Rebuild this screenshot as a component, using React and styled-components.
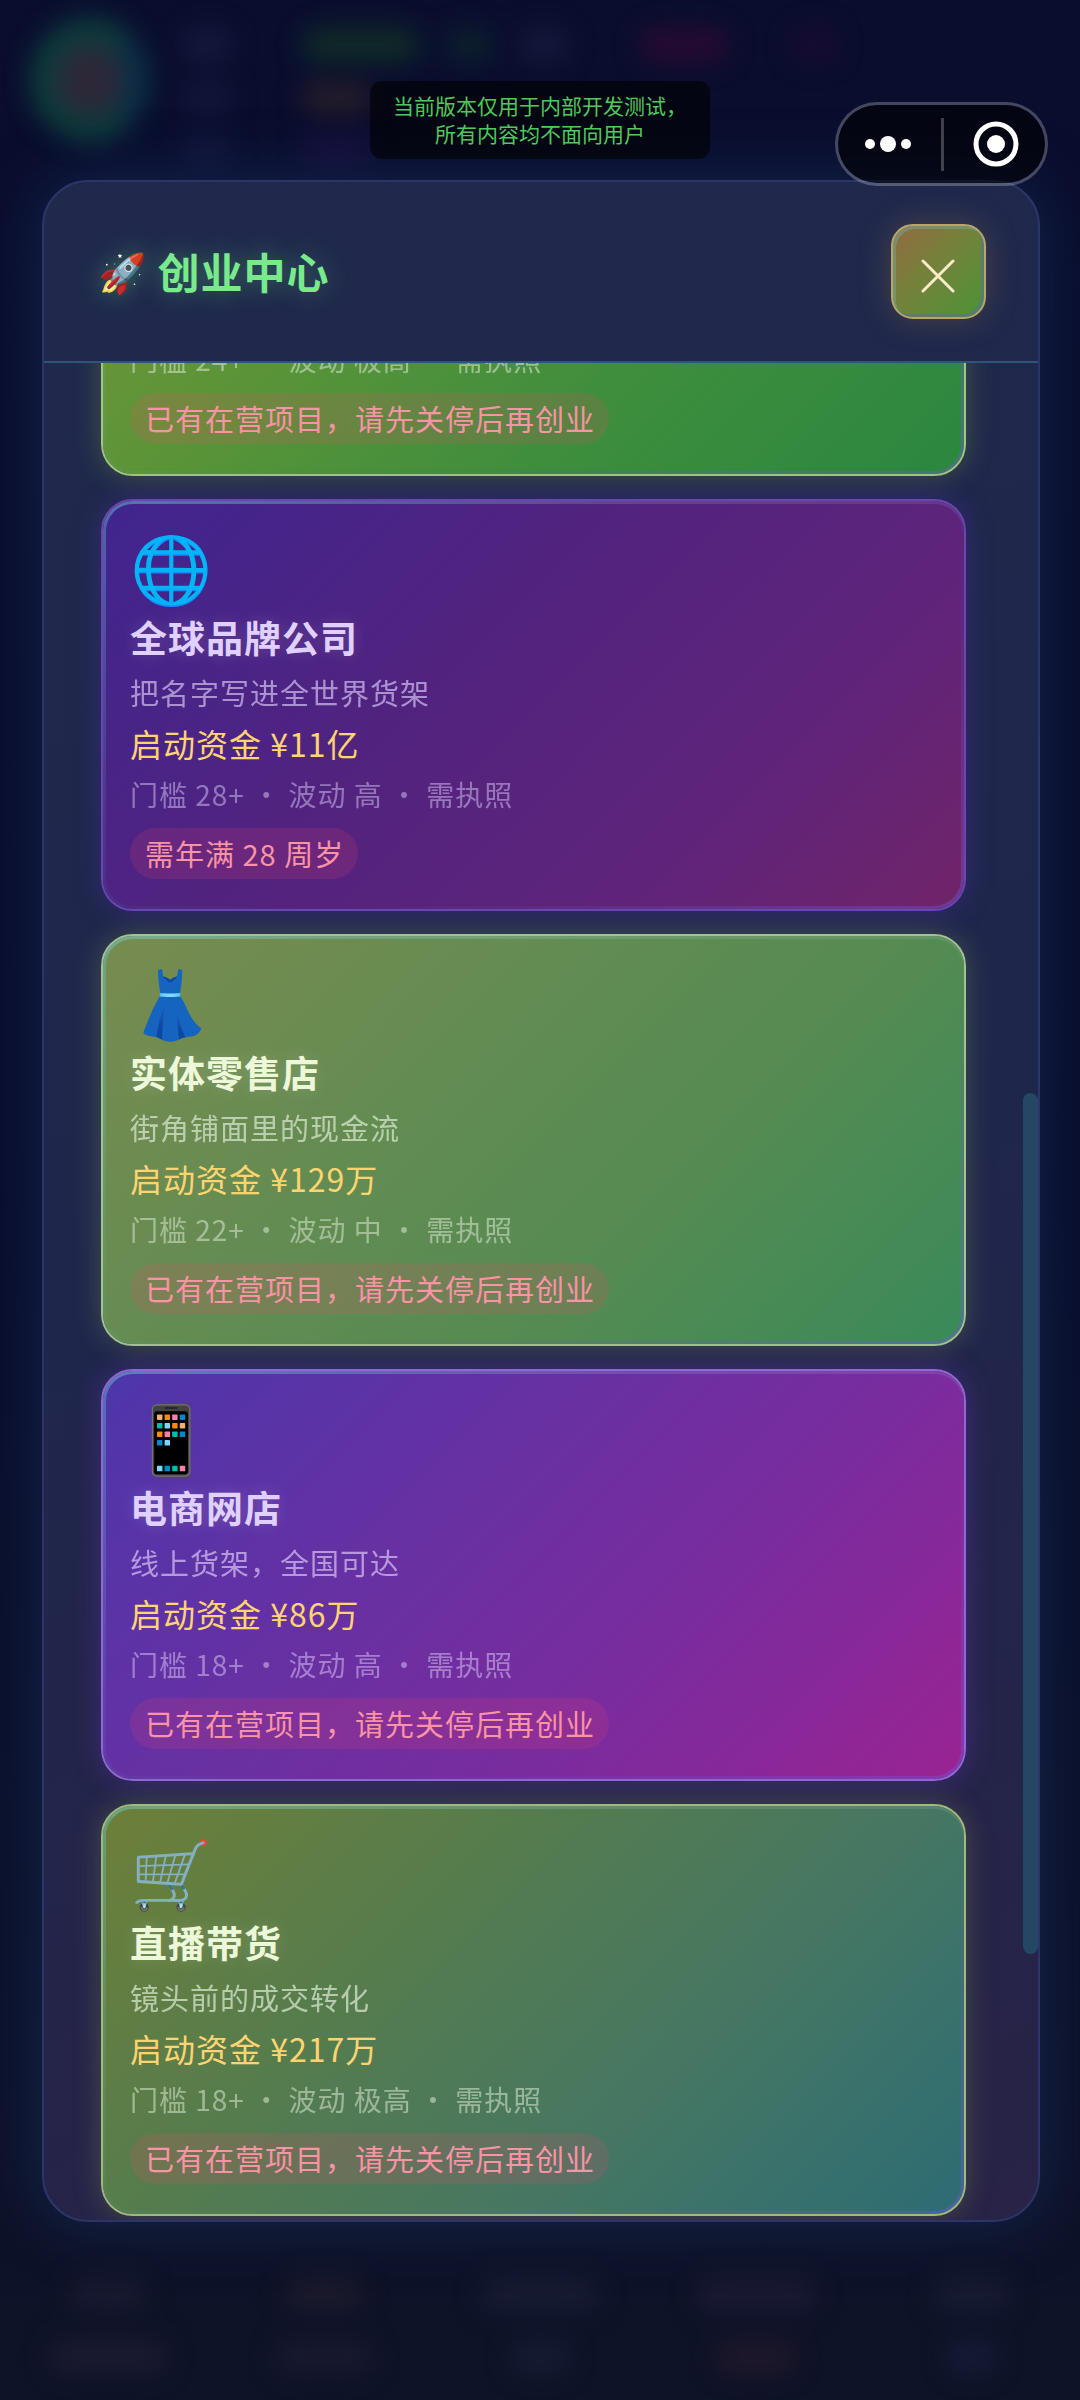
import React from 'react'
import styled, { createGlobalStyle } from 'styled-components'

const GlobalStyle = createGlobalStyle`
  * {
    box-sizing: border-box;
  }
  body {
    margin: 0;
    background: #090d2a;
    font-family: "Noto Sans CJK SC", "Noto Color Emoji", sans-serif;
  }
  button {
    font-family: inherit;
    padding: 0;
    cursor: pointer;
  }
`

const Screen = styled.div`
  position: relative;
  display: flex;
  height: 100vh;
  min-height: 900px;
  padding: 180px 40px 178px 42px;
  overflow: hidden;
  background: linear-gradient(#0a0e2e, #090d2c 50%, #0e1328);
`

const Scenery = styled.div`
  position: absolute;
  inset: 0;
  display: flex;
  flex-direction: column;
  justify-content: space-between;
  filter: blur(12px);
`

const Hud = styled.div`
  display: flex;
  gap: 32px;
  padding: 18px 30px;
`

const Avatar = styled.div`
  width: 120px;
  height: 124px;
  border-radius: 50%;
  border: 26px solid #0d3d3c;
  border-right-color: #0c3048;
  background: #2c2838;
`

const HudGrid = styled.div`
  display: grid;
  grid-template-columns: 120px 145px 72px 120px 152px 50px;
  grid-auto-rows: 34px;
  row-gap: 19px;
  padding-top: 10px;
`

const Nav = styled.div`
  display: grid;
  grid-template-columns: repeat(5, 1fr);
  justify-items: center;
  gap: 30px 0;
  padding: 0 0 26px;
`

const Blob = styled.div`
  width: ${p => p.$width};
  height: 34px;
  border-radius: 17px;
  background: ${p => p.$color};
`

const Notice = styled.div`
  position: absolute;
  z-index: 2;
  top: 81px;
  left: 50%;
  transform: translateX(-50%);
  padding: 10px 23px 12px;
  border-radius: 12px;
  background: rgba(0, 0, 0, 0.6);
  color: #4fc95c;
  font-size: 21px;
  line-height: 28px;
  text-align: center;
  white-space: nowrap;
`

const Capsule = styled.div`
  position: absolute;
  z-index: 2;
  top: 102px;
  right: 32px;
  display: flex;
  justify-content: space-between;
  align-items: center;
  width: 213px;
  height: 84px;
  padding: 0 26px;
  border: 3px solid rgba(255, 255, 255, 0.24);
  border-radius: 42px;
  background: rgba(0, 0, 0, 0.6);
  background-clip: padding-box;
`

const CapsuleButton = styled.button`
  display: flex;
  align-items: center;
  height: 100%;
  border: none;
  background: none;
`

const CapsuleDivider = styled.div`
  width: 3px;
  height: 53px;
  background: rgba(255, 255, 255, 0.24);
`

const Panel = styled.section`
  position: relative;
  flex: 1;
  display: flex;
  flex-direction: column;
  min-width: 0;
  border: 2px solid #2b3567;
  border-radius: 46px;
  overflow: hidden;
  background: linear-gradient(165deg, #20294c, #1f264c 50%, #282347);
  box-shadow: 0 0 60px rgba(30, 60, 110, 0.5);
`

const Header = styled.header`
  display: flex;
  justify-content: space-between;
  align-items: center;
  height: 181px;
  flex-shrink: 0;
  padding: 0 52px 0 54px;
  border-bottom: 2px solid #2d5578;
`

const Title = styled.h1`
  display: flex;
  align-items: center;
  gap: 10px;
  margin: 0;
  padding-bottom: 3px;
  color: #79ea8c;
  font-size: 42px;
  letter-spacing: 1px;
  text-shadow: 0 0 24px rgba(100, 230, 130, 0.4);
`

const Rocket = styled.span`
  font-size: 39px;
`

const CloseButton = styled.button`
  display: flex;
  justify-content: center;
  align-items: center;
  width: 95px;
  height: 95px;
  padding: 8px 2px 0 0;
  border: 2px solid #b9a56c;
  border-radius: 22px;
  background: linear-gradient(135deg, #94693f, #77803b 40%, #529138 90%);
  box-shadow: 0 0 32px rgba(200, 150, 60, 0.25), inset 3px 3px 0 rgba(110, 170, 150, 0.5),
    inset -3px -3px 0 rgba(90, 110, 150, 0.5);
`

const ListArea = styled.div`
  position: relative;
  flex: 1;
  min-height: 0;
  display: flex;
`

const List = styled.div`
  flex: 1;
  display: flex;
  flex-direction: column;
  justify-content: flex-end;
  gap: 23px;
  padding: 0 72px 4px 57px;
  overflow: hidden;
`

const ScrollThumb = styled.div`
  position: absolute;
  right: 0;
  top: 39.3%;
  width: 15px;
  height: 46.4%;
  border-radius: 8px;
  background: #244766;
`

const themes = {
  lime: {
    fill: 'linear-gradient(135deg, #7d9438, #5b9438 35%, #3f8e3d 65%, #2b873f)',
    border: '#a3c67c',
    glow: 'rgba(150, 190, 70, 0.3)',
    title: '#ecf8d8',
    text: '#cfe0c6'
  },
  violet: {
    fill: 'linear-gradient(135deg, #40258f, #51237f 40%, #60247a 75%, #702468)',
    border: '#6b45b2',
    glow: 'rgba(90, 50, 190, 0.35)',
    title: '#dfd0ff',
    text: '#c3aee4'
  },
  sage: {
    fill: 'linear-gradient(135deg, #788b50, #648c52 35%, #558b52 65%, #3a8a59)',
    border: '#a4c290',
    glow: 'rgba(150, 180, 90, 0.3)',
    title: '#ecf8d8',
    text: '#cfe0c6'
  },
  magenta: {
    fill: 'linear-gradient(135deg, #4d36aa, #6930a2 40%, #7d2b9d 70%, #9a2393)',
    border: '#9166d6',
    glow: 'rgba(120, 60, 210, 0.35)',
    title: '#dfd0ff',
    text: '#cdb2ec'
  },
  teal: {
    fill: 'linear-gradient(135deg, #6d7f38, #587d4b 30%, #467762 65%, #2d6c74)',
    border: '#a2b97c',
    glow: 'rgba(150, 170, 80, 0.3)',
    title: '#ecf8d8',
    text: '#cfe0c6'
  }
}

// The 3px of padding shows the second background as a bevel inside the border
const Card = styled.article`
  display: flex;
  flex-shrink: 0;
  min-height: 412px;
  padding: 3px;
  border: 2px solid ${p => p.$theme.border};
  border-radius: 32px;
  background: ${p => p.$theme.fill} content-box,
    linear-gradient(150deg, rgba(90, 205, 210, 0.4), rgba(90, 200, 200, 0.1) 35%, transparent 60%, rgba(110, 90, 220, 0.4)) padding-box,
    ${p => p.$theme.fill} padding-box;
  box-shadow: 0 0 28px ${p => p.$theme.glow}, inset 0 3px 0 rgba(255, 255, 255, 0.08);
`

const CardBody = styled.div`
  flex: 1;
  display: flex;
  flex-direction: column;
  justify-content: flex-end;
  align-items: flex-start;
  gap: 8px;
  padding: 21px 24px 27px;
  letter-spacing: 1px;
`

const Emoji = styled.div`
  height: 79px;
  font-size: 66px;
  line-height: 79px;
`

const Name = styled.h2`
  margin: 0;
  color: ${p => p.$theme.title};
  font-size: 37px;
  line-height: 50px;
  text-shadow: 0 0 16px rgba(255, 255, 255, 0.15);
`

const Description = styled.p`
  margin: 0;
  color: ${p => p.$theme.text};
  opacity: 0.8;
  font-size: 29px;
  line-height: 44px;
`

const Cost = styled.p`
  margin: 0;
  color: #ffd470;
  font-size: 32px;
  line-height: 42px;
`

const Meta = styled.p`
  margin: 0;
  color: ${p => p.$theme.text};
  opacity: 0.6;
  font-size: 28px;
  line-height: 44px;
  white-space: pre;
`

const Warning = styled.div`
  margin-top: 4px;
  padding: 0 14px 0 15px;
  border-radius: 26px;
  background: rgba(255, 70, 110, 0.15);
  color: #fa93a4;
  font-size: 29px;
  line-height: 51px;
`

const RUNNING = '已有在营项目，请先关停后再创业'

const projects = [
  { id: 'tech', meta: ['门槛 24+', '波动 极高', '需执照'], warning: RUNNING, theme: 'lime' },
  { id: 'brand', icon: '🌐', name: '全球品牌公司', description: '把名字写进全世界货架', cost: '¥11亿', meta: ['门槛 28+', '波动 高', '需执照'], warning: '需年满 28 周岁', theme: 'violet' },
  { id: 'retail', icon: '👗', name: '实体零售店', description: '街角铺面里的现金流', cost: '¥129万', meta: ['门槛 22+', '波动 中', '需执照'], warning: RUNNING, theme: 'sage' },
  { id: 'shop', icon: '📱', name: '电商网店', description: '线上货架，全国可达', cost: '¥86万', meta: ['门槛 18+', '波动 高', '需执照'], warning: RUNNING, theme: 'magenta' },
  { id: 'live', icon: '🛒', name: '直播带货', description: '镜头前的成交转化', cost: '¥217万', meta: ['门槛 18+', '波动 极高', '需执照'], warning: RUNNING, theme: 'teal' }
]

const hudItems = [
  ['50px', '#14183c'], ['118px', '#0f2b28'], ['46px', '#0d202c'], ['50px', '#14183a'], ['90px', '#270a33'], ['46px', '#1a0b31'],
  ['50px', '#12163a'], ['70px', '#241c2a'], ['46px', 'transparent'], ['50px', 'transparent'], ['90px', 'transparent'], ['46px', 'transparent'],
  ['50px', '#11153a'], ['70px', '#150f3c']
]

const navItems = [
  ['80px', '#171a30'], ['80px', '#1b1a2c'], ['120px', '#171b33'], ['120px', '#1a1a33'], ['80px', '#171b32'],
  ['120px', '#1a1a30'], ['100px', '#18192e'], ['60px', '#151b32'], ['80px', '#1f182a'], ['50px', '#161b36']
]

function ProjectCard ({ project }) {
  const theme = themes[project.theme]
  return <Card $theme={theme}>
    <CardBody>
      {project.name && <>
        <Emoji>{project.icon}</Emoji>
        <Name $theme={theme}>{project.name}</Name>
        <Description $theme={theme}>{project.description}</Description>
        <Cost>启动资金 {project.cost}</Cost>
      </>}
      <Meta $theme={theme}>{project.meta.join(' · ')}</Meta>
      <Warning>{project.warning}</Warning>
    </CardBody>
  </Card>
}

export default function App () {
  return <>
    <GlobalStyle />
    <Screen>
      <Scenery aria-hidden='true'>
        <Hud>
          <Avatar />
          <HudGrid>
            {hudItems.map(([width, color], i) => <Blob key={i} $width={width} $color={color} />)}
          </HudGrid>
        </Hud>
        <Nav>
          {navItems.map(([width, color], i) => <Blob key={i} $width={width} $color={color} />)}
        </Nav>
      </Scenery>
      <Panel>
        <Header>
          <Title><Rocket>🚀</Rocket>创业中心</Title>
          <CloseButton aria-label='关闭'>
            <svg width='34' height='34' viewBox='0 0 34 34' stroke='#fdebc8' strokeWidth='3' strokeLinecap='round'>
              <path d='M2 2L32 32M32 2L2 32' />
            </svg>
          </CloseButton>
        </Header>
        <ListArea>
          <List>
            {projects.map(project => <ProjectCard key={project.id} project={project} />)}
          </List>
          <ScrollThumb />
        </ListArea>
      </Panel>
      <Notice>当前版本仅用于内部开发测试，<br />所有内容均不面向用户</Notice>
      <Capsule>
        <CapsuleButton aria-label='更多'>
          <svg width='48' height='18' viewBox='0 0 48 18' fill='#fff'>
            <circle cx='6' cy='9' r='5' />
            <circle cx='24' cy='9' r='8' />
            <circle cx='42' cy='9' r='5' />
          </svg>
        </CapsuleButton>
        <CapsuleDivider />
        <CapsuleButton aria-label='退出'>
          <svg width='46' height='46' viewBox='0 0 46 46'>
            <circle cx='23' cy='23' r='20' fill='none' stroke='#fff' strokeWidth='5' />
            <circle cx='23' cy='23' r='9' fill='#fff' />
          </svg>
        </CapsuleButton>
      </Capsule>
    </Screen>
  </>
}
